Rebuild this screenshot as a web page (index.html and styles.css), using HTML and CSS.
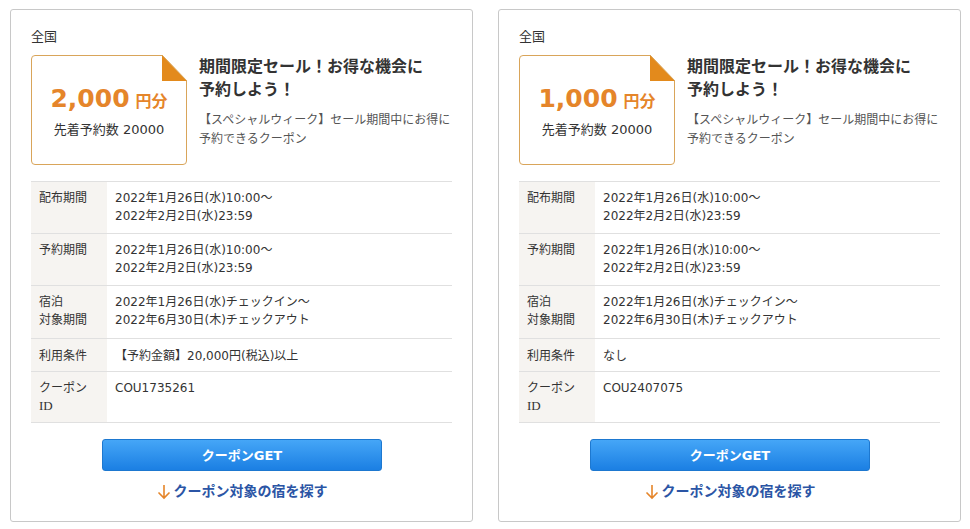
FILE: index.html
```html
<!DOCTYPE html>
<html lang="ja">
<head>
<meta charset="utf-8">
<link rel="stylesheet" href="styles.css">
</head>
<body>
<div class="page">
  <div class="card">
    <div class="area">全国</div>
    <div class="head">
      <div class="ticket">
        <svg class="fold" width="25" height="26" viewBox="0 0 25 26"><polygon points="0,0 0,26 25,26" fill="#e38a1c"/><polyline points="0,0 25,26" fill="none" stroke="#d9a55a" stroke-width="1"/></svg>
        <div class="amount"><span class="num">2,000</span><span class="unit">円分</span></div>
        <div class="limit">先着予約数 20000</div>
      </div>
      <div class="info">
        <div class="title">期間限定セール！お得な機会に予約しよう！</div>
        <div class="desc">【スペシャルウィーク】セール期間中にお得に予約できるクーポン</div>
      </div>
    </div>
    <table class="terms">
      <tr><th>配布期間</th><td>2022年1月26日(水)10:00～<br>2022年2月2日(水)23:59</td></tr>
      <tr><th>予約期間</th><td>2022年1月26日(水)10:00～<br>2022年2月2日(水)23:59</td></tr>
      <tr class="stay"><th>宿泊<br>対象期間</th><td>2022年1月26日(水)チェックイン～<br>2022年6月30日(木)チェックアウト</td></tr>
      <tr class="short"><th>利用条件</th><td>【予約金額】20,000円(税込)以上</td></tr>
      <tr class="last"><th>クーポン<br><span class="serif">ID</span></th><td>COU1735261</td></tr>
    </table>
    <div class="actions">
      <a class="get">クーポンGET</a>
      <a class="find"><svg class="arrow" width="14" height="16" viewBox="0 0 14 16"><path d="M7 1V14M1.5 8.5L7 14L12.5 8.5" fill="none" stroke="#e5852a" stroke-width="1.6"/></svg>クーポン対象の宿を探す</a>
    </div>
  </div>
  <div class="card">
    <div class="area">全国</div>
    <div class="head">
      <div class="ticket">
        <svg class="fold" width="25" height="26" viewBox="0 0 25 26"><polygon points="0,0 0,26 25,26" fill="#e38a1c"/><polyline points="0,0 25,26" fill="none" stroke="#d9a55a" stroke-width="1"/></svg>
        <div class="amount"><span class="num">1,000</span><span class="unit">円分</span></div>
        <div class="limit">先着予約数 20000</div>
      </div>
      <div class="info">
        <div class="title">期間限定セール！お得な機会に予約しよう！</div>
        <div class="desc">【スペシャルウィーク】セール期間中にお得に予約できるクーポン</div>
      </div>
    </div>
    <table class="terms">
      <tr><th>配布期間</th><td>2022年1月26日(水)10:00～<br>2022年2月2日(水)23:59</td></tr>
      <tr><th>予約期間</th><td>2022年1月26日(水)10:00～<br>2022年2月2日(水)23:59</td></tr>
      <tr class="stay"><th>宿泊<br>対象期間</th><td>2022年1月26日(水)チェックイン～<br>2022年6月30日(木)チェックアウト</td></tr>
      <tr class="short"><th>利用条件</th><td>なし</td></tr>
      <tr class="last"><th>クーポン<br><span class="serif">ID</span></th><td>COU2407075</td></tr>
    </table>
    <div class="actions">
      <a class="get">クーポンGET</a>
      <a class="find"><svg class="arrow" width="14" height="16" viewBox="0 0 14 16"><path d="M7 1V14M1.5 8.5L7 14L12.5 8.5" fill="none" stroke="#e5852a" stroke-width="1.6"/></svg>クーポン対象の宿を探す</a>
    </div>
  </div>
</div>
</body>
</html>
```
FILE: styles.css
```css
* { box-sizing: border-box; }
html, body { margin: 0; background: #fff; }
body {
  font-family: "DejaVu Sans", "Noto Sans CJK JP", sans-serif;
  color: #333;
}
.page {
  display: flex;
  gap: 25px;
  padding: 9px 0 0 10px;
}
.card {
  width: 463px;
  height: 513px;
  border: 1px solid #c8c8c8;
  border-radius: 3px;
  padding: 18px 19px 0 20px;
}
.area {
  font-size: 13px;
  line-height: 18px;
  color: #333;
}
.head {
  display: flex;
  margin-top: 9px;
  gap: 12px;
}
.ticket {
  position: relative;
  width: 156px;
  height: 110px;
  border: 1px solid #d9a55a;
  border-radius: 4px;
  border-top-right-radius: 0;
  text-align: center;
  padding-top: 25px;
  flex: none;
  background: #fff;
}
.fold {
  position: absolute;
  top: -1px;
  right: -1px;
  background: #fff;
}
.amount {
  color: #e5852a;
  font-weight: bold;
  line-height: 36px;
}
.num {
  font-size: 25px;
  font-weight: 700;
}
.unit {
  font-size: 16px;
  margin-left: 6px;
}
.limit {
  font-size: 13px;
  line-height: 20px;
  color: #333;
}
.info {
  width: 256px;
}
.title {
  max-width: 232px;
  font-size: 16px;
  font-weight: bold;
  line-height: 23px;
  color: #333;
}
.desc {
  margin-top: 10px;
  font-size: 12px;
  line-height: 19px;
  color: #555;
}
.terms {
  margin-top: 16px;
  width: 421px;
  border-collapse: collapse;
  font-size: 12px;
  line-height: 18px;
}
.terms tr { border-top: 1px solid #e0e0e0; border-bottom: 1px solid #e0e0e0; }
.terms th {
  width: 76px;
  background: #f6f4f1;
  text-align: left;
  font-weight: normal;
  color: #333;
  padding: 7px 0 8px 8px;
  vertical-align: top;
}
.terms td {
  padding: 7px 0 8px 8px;
  vertical-align: top;
  color: #333;
}
.terms tr.stay th, .terms tr.stay td { padding-bottom: 9px; }
.terms tr.short th, .terms tr.short td { padding-top: 8px; padding-bottom: 6px; }
.terms tr.last th, .terms tr.last td { padding-bottom: 7px; }
.serif { font-family: "Liberation Serif", serif; font-size: 13px; }
.actions {
  display: flex;
  flex-direction: column;
  align-items: center;
  margin-top: 16px;
}
.get {
  display: block;
  width: 280px;
  height: 32px;
  line-height: 31px;
  text-align: center;
  color: #fff;
  font-weight: bold;
  font-size: 13px;
  border-radius: 3px;
  background: linear-gradient(#45a6f7, #1b7fe3);
  border: 1px solid #1d78d0;
}
.find {
  display: flex;
  align-items: center;
  margin-top: 9px;
  font-size: 14px;
  font-weight: bold;
  color: #2b55a5;
  line-height: 20px;
  font-family: "Noto Sans CJK JP", sans-serif;
}
.arrow {
  margin: 4px 3px 0 0;
}
```
